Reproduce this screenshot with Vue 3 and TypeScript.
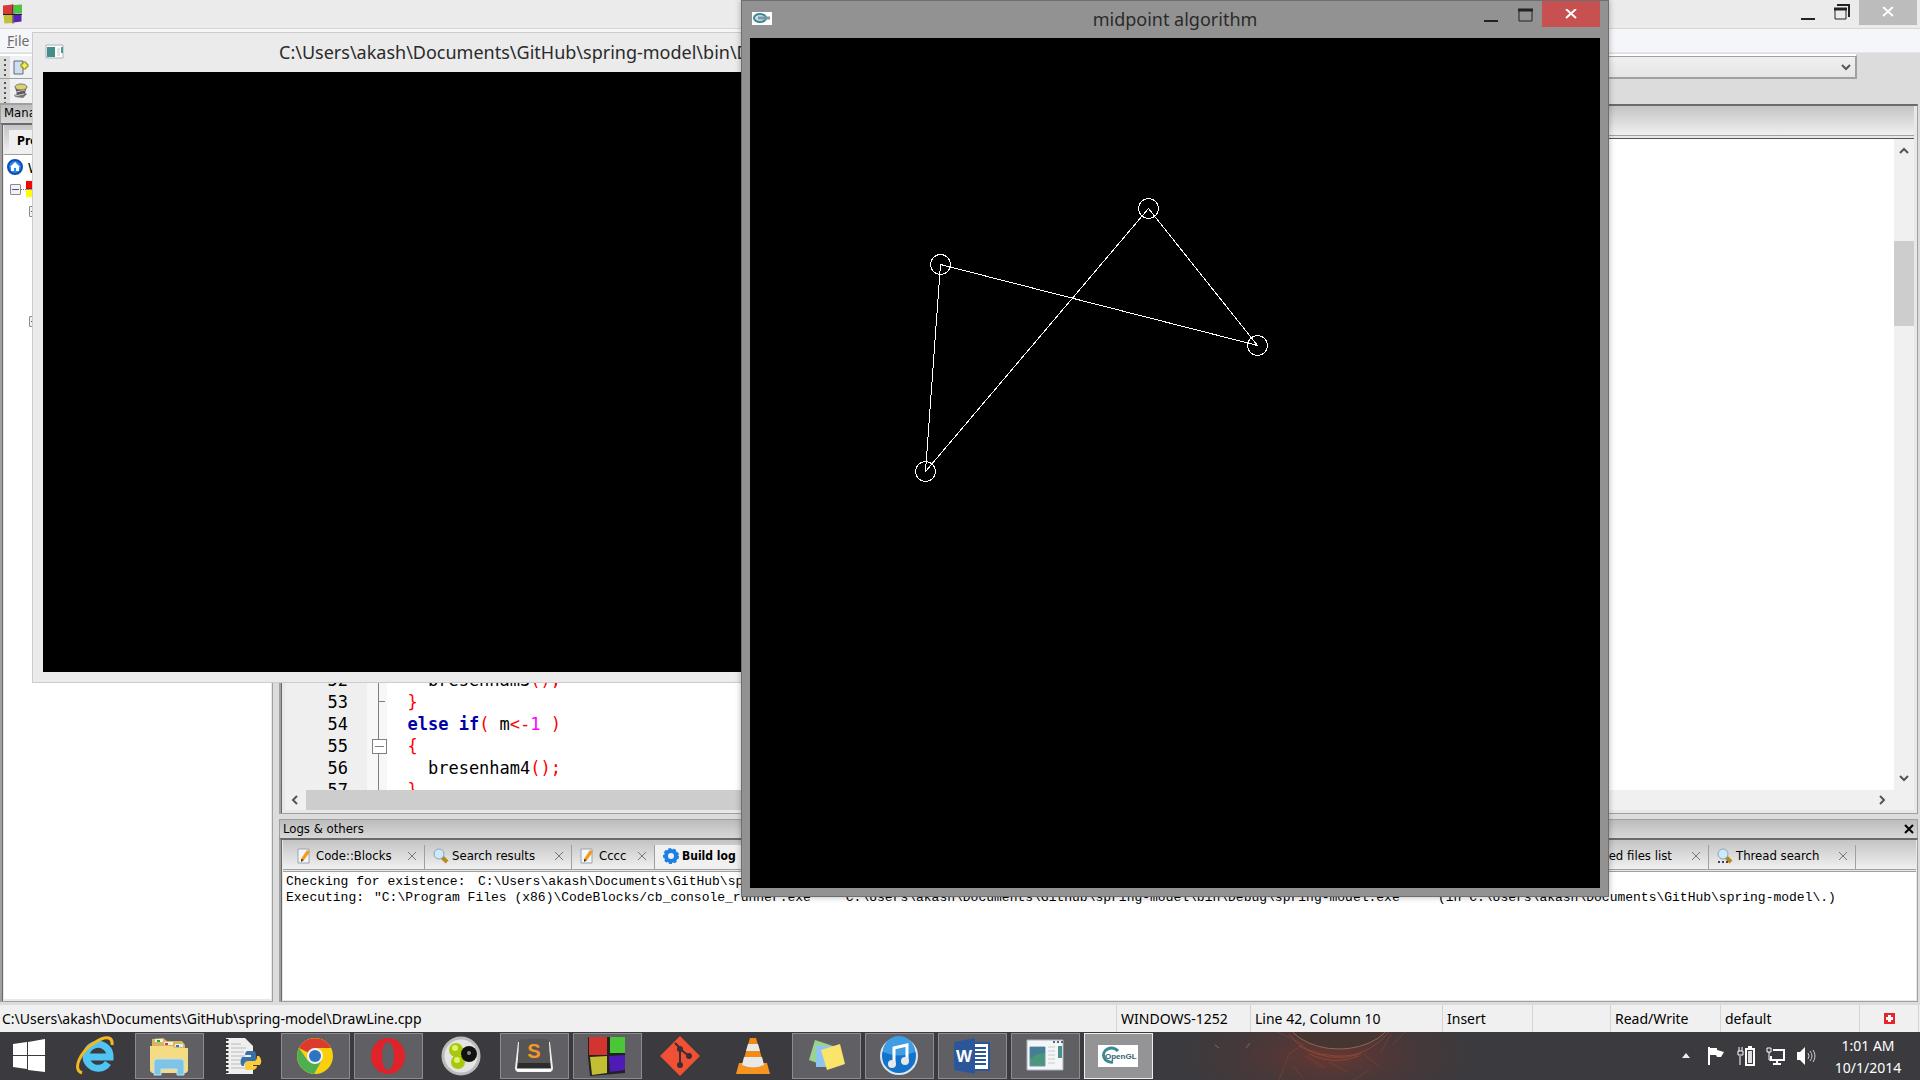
<script setup lang="ts">
import { computed, ref } from 'vue'

interface Point { x: number; y: number }
interface Token { text: string; kind?: 'kw' | 'op' | 'num' }
interface CodeLine { no: number; fold: 'line' | 'end' | 'box'; tokens: Token[] }

const points: Point[] = [
  { x: 398, y: 170 },
  { x: 507, y: 307 },
  { x: 190, y: 226 },
  { x: 175, y: 433 },
]
const outline = computed(() => points.map((p) => `${p.x},${p.y}`).join(' '))

const lines: CodeLine[] = [
  { no: 52, fold: 'line', tokens: [{ text: '    bresenham3' }, { text: '();', kind: 'op' }] },
  { no: 53, fold: 'end', tokens: [{ text: '  }', kind: 'op' }] },
  {
    no: 54,
    fold: 'line',
    tokens: [
      { text: '  else if', kind: 'kw' },
      { text: '(', kind: 'op' },
      { text: ' m' },
      { text: '<-', kind: 'op' },
      { text: '1', kind: 'num' },
      { text: ' )', kind: 'op' },
    ],
  },
  { no: 55, fold: 'box', tokens: [{ text: '  {', kind: 'op' }] },
  { no: 56, fold: 'line', tokens: [{ text: '    bresenham4' }, { text: '();', kind: 'op' }] },
  { no: 57, fold: 'line', tokens: [{ text: '  }', kind: 'op' }] },
]

const target = ref('')
const root = 'C:\\Users\\akash\\Documents\\GitHub\\spring-model'
const exe = root + '\\bin\\Debug\\spring-model.exe'
const runner = '"C:\\Program Files (x86)\\CodeBlocks/cb_console_runner.exe"'
</script>

<template>
  <div class="desktop">
    <main class="ide">
      <header class="ide-title">
        <svg class="app-icon" viewBox="0 0 38 38">
          <path d="M0 2 20 0V19L0 20z" fill="#d63a34" /><path d="M22 1 38 0V17L22 19z" fill="#4cc63a" />
          <path d="M1 21 19 20V37L3 38z" fill="#c2bf38" /><path d="M21 20 37 18V34L21 36z" fill="#5b22b8" />
          <path d="M20 0v38M0 20h38" stroke="#222" stroke-width="2" />
        </svg>
        <div class="win-controls">
          <button class="wc" aria-label="Minimize"><svg width="15" height="16"><path d="M0 15h14" stroke="#222" stroke-width="2" /></svg></button>
          <button class="wc" aria-label="Restore"><svg width="16" height="16"><path d="M3 1h12v12" fill="none" stroke="#222" stroke-width="2" /><path d="M1 5h11v10H1z" fill="#ebebeb" stroke="#222" /><path d="M0 5h13" stroke="#222" stroke-width="3" /></svg></button>
          <button class="wc close inactive" aria-label="Close"><svg width="12" height="10"><path d="M1 0 11 9M11 0 1 9" stroke="#fff" stroke-width="2" /></svg></button>
        </div>
      </header>
      <nav class="menubar"><button class="menu"><u>F</u>ile</button></nav>
      <div class="toolbars">
        <div class="toolbar first">
          <span class="grip"></span>
          <button class="tool" aria-label="New file">
            <svg width="16" height="16"><path d="M1 2h9v13H1z" fill="#cfdeee" stroke="#5e6b7a" /><path d="M8 5h2V3h3v2h2v3h-2v2h-3V8H8z" fill="#f1ef57" stroke="#8b8b1d" /></svg>
          </button>
          <select v-model="target" class="combo" aria-label="Symbol"><option value=""></option></select>
          <svg class="combo-arrow" width="10" height="7"><path d="m1 1 4 4 4-4" fill="none" stroke="#555" stroke-width="2" /></svg>
        </div>
        <div class="toolbar second">
          <span class="grip"></span>
          <button class="tool" aria-label="Build">
            <svg width="16" height="16"><path d="m1 12 9-3 4 2-4 4-8-1z" fill="#777" /><path d="M2 4 14 3l-2 7-8 2z" fill="#5a5a5a" /><path d="m3 9 9-2M2 13l9-2" stroke="#ccc" /><ellipse cx="8" cy="4" rx="6" ry="3" fill="#dfd06a" stroke="#777" /></svg>
          </button>
        </div>
      </div>

      <div class="body">
        <aside class="manager">
          <h2 class="caption">Management</h2>
          <div class="frame">
            <div class="strip"><button class="tab side active">Projects</button></div>
            <ul class="tree">
              <li>
                <svg width="16" height="16"><circle cx="8" cy="8" r="7" fill="#2a86ee" stroke="#0b4fae" stroke-width="2" /><path d="m8 3 5 5h-1v4H9V9H7v3H4V8H3z" fill="#fff" /></svg>
                <span>Workspace</span>
              </li>
              <li class="project">
                <span class="expander"></span><i class="dots"></i>
                <svg width="16" height="16"><path d="M0 0h8v8H0z" fill="#f00" /><path d="M0 9h8v7H0z" fill="#ff0" /><path d="M0 8h16" stroke="#333" /></svg>
              </li>
              <li class="child"><span class="expander"></span></li>
              <li class="child later"><span class="expander"></span></li>
            </ul>
          </div>
        </aside>

        <section class="work">
          <div class="frame editor">
            <div class="strip"></div>
            <div class="pane">
              <div class="view">
                <div class="code">
                  <div v-for="l in lines" :key="l.no" class="row">
                    <span class="no">{{ l.no }}</span>
                    <span class="fold" :class="l.fold"></span>
                    <pre class="src"><span v-for="(t, i) in l.tokens" :key="i" :class="t.kind">{{ t.text }}</span></pre>
                  </div>
                </div>
                <div class="vbar">
                  <svg width="10" height="8"><path d="m1 6 4-4 4 4" fill="none" stroke="#555" stroke-width="2" /></svg>
                  <i class="vthumb"></i>
                  <svg width="10" height="8"><path d="m1 2 4 4 4-4" fill="none" stroke="#555" stroke-width="2" /></svg>
                </div>
              </div>
              <div class="hbar">
                <svg width="8" height="10"><path d="M6 1 2 5l4 4" fill="none" stroke="#555" stroke-width="2" /></svg>
                <i class="hthumb"></i>
                <svg width="8" height="10"><path d="m2 1 4 4-4 4" fill="none" stroke="#555" stroke-width="2" /></svg>
              </div>
            </div>
          </div>

          <div class="logs">
            <h2 class="caption">
              Logs &amp; others
              <button class="cap-close" aria-label="Close panel"><svg width="10" height="10"><path d="m1 1 8 8M9 1 1 9" stroke="#000" stroke-width="2" /></svg></button>
            </h2>
            <div class="frame log-frame">
              <div class="strip log-tabs">
                <button class="tab t-blocks">
                  <svg width="16" height="16"><path d="M1 1h11v14H1z" fill="#f4f6fa" stroke="#9aa3b2" /><path d="m4 11 6-9 3 2-6 8-3 2z" fill="#f49a1c" /><path d="m4 11 3 1-3 2z" fill="#442" /></svg>
                  Code::Blocks<svg class="x" width="10" height="10"><path d="m1 1 8 8M9 1 1 9" stroke="#777" /></svg>
                </button>
                <button class="tab t-search">
                  <svg width="16" height="16"><path d="m9 9 5 5" stroke="#b98a1a" stroke-width="4" /><circle cx="6" cy="6" r="5" fill="#cdeafa" stroke="#86a6bd" /></svg>
                  Search results<svg class="x" width="10" height="10"><path d="m1 1 8 8M9 1 1 9" stroke="#777" /></svg>
                </button>
                <button class="tab t-cccc">
                  <svg width="16" height="16"><path d="M1 1h11v14H1z" fill="#f4f6fa" stroke="#9aa3b2" /><path d="m4 11 6-9 3 2-6 8-3 2z" fill="#f49a1c" /><path d="m4 11 3 1-3 2z" fill="#442" /></svg>
                  Cccc<svg class="x" width="10" height="10"><path d="m1 1 8 8M9 1 1 9" stroke="#777" /></svg>
                </button>
                <button class="tab t-build active">
                  <svg width="16" height="16"><circle cx="8" cy="8" r="5" fill="none" stroke="#1c7fe6" stroke-width="4" /><circle cx="8" cy="8" r="7" fill="none" stroke="#1c7fe6" stroke-width="2" stroke-dasharray="3 2" /></svg>
                  Build log
                </button>
                <button class="tab t-files">Closed files list<svg class="x" width="10" height="10"><path d="m1 1 8 8M9 1 1 9" stroke="#777" /></svg></button>
                <button class="tab t-search">
                  <svg width="16" height="16"><path d="m9 9 5 5" stroke="#b98a1a" stroke-width="4" /><circle cx="6" cy="6" r="5" fill="#cdeafa" stroke="#86a6bd" /><path d="M1 14h2m2 0h2m2 0h2" stroke="#444" stroke-width="2" /></svg>
                  Thread search<svg class="x" width="10" height="10"><path d="m1 1 8 8M9 1 1 9" stroke="#777" /></svg>
                </button>
              </div>
              <div class="log-text">
                <p class="check"><span>Checking for existence:</span><span>{{ exe }}</span></p>
                <p class="exec"><span>Executing:</span><span>{{ runner }}</span><span>"{{ exe }}"</span><span>(in {{ root }}\.)</span></p>
              </div>
            </div>
          </div>
        </section>
      </div>

      <footer class="status">
        <span class="path">{{ root }}\DrawLine.cpp</span>
        <span class="s-enc">WINDOWS-1252</span>
        <span class="s-pos">Line 42, Column 10</span>
        <span class="s-ins">Insert</span>
        <span class="s-empty"></span>
        <span class="s-rw">Read/Write</span>
        <span class="s-def">default</span>
        <span class="s-icon"><svg width="11" height="11"><path d="M0 0h11v11H0z" fill="#e8232a" /><path d="M4 2h3v2h2v3H7v2H4V7H2V4h2z" fill="#fff" /></svg></span>
      </footer>
    </main>

    <section class="window console">
      <header class="console-title">
        <svg width="20" height="16"><path d="M1 1h17v13H1z" fill="#fff" stroke="#a9b2bd" /><path d="M2 3h8v10H2z" fill="#458d8a" /><path d="M12 4h3v8h-3z" fill="#e4e4dc" /><path d="M16 3h2v6h-2z" fill="#4a9b8c" /></svg>
        <h1>{{ exe }}</h1>
      </header>
      <div class="screen"></div>
    </section>

    <section class="window gl">
      <header class="gl-title">
        <svg width="20" height="13"><path d="M0 0h20v13H0z" fill="#fff" /><ellipse cx="8" cy="6" rx="6" ry="4" fill="#cfdfe3" stroke="#3f8592" stroke-width="2" /><path d="M6 6h12" stroke="#7b98a8" stroke-width="3" /></svg>
        <h1>midpoint algorithm</h1>
        <div class="win-controls">
          <button class="wc" aria-label="Minimize"><svg width="14" height="16"><path d="M0 15h14" stroke="#222" stroke-width="2" /></svg></button>
          <button class="wc" aria-label="Maximize"><svg width="15" height="16"><path d="M1 4h13v11H1z" fill="none" stroke="#222" /><path d="M0 4h15" stroke="#222" stroke-width="3" /></svg></button>
          <button class="wc close" aria-label="Close"><svg width="12" height="10"><path d="M1 0 11 9M11 0 1 9" stroke="#fff" stroke-width="2" /></svg></button>
        </div>
      </header>
      <svg class="canvas" width="850" height="850" viewBox="0 0 850 850" shape-rendering="crispEdges" fill="none" stroke="#fff">
        <g transform="translate(0.5 0.5)">
          <polygon :points="outline" />
          <circle v-for="p in points" :key="p.x" :cx="p.x" :cy="p.y" r="10" />
        </g>
      </svg>
    </section>

    <nav class="taskbar">
      <svg class="wallpaper" width="320" height="48" fill="none">
        <defs>
          <radialGradient id="glow"><stop offset="0" stop-color="#8a3526" stop-opacity=".55" /><stop offset="1" stop-color="#552a2a" stop-opacity="0" /></radialGradient>
        </defs>
        <ellipse cx="175" cy="24" rx="160" ry="54" fill="url(#glow)" />
        <ellipse cx="186" cy="-18" rx="54" ry="35" fill="#453632" stroke="#a5704f" stroke-opacity=".8" />
        <path d="M136 2q14 20 46 22t54-24M146 14q30 18 62 8M156 22q24 12 50 2" stroke="#b8553a" stroke-opacity=".45" />
        <path d="M120 -2l30 14-14 10-10 26M152 24l20 12M176 30l18 10M210 22l16 12M228 20l10-18M240 12l12-12M150 46l-10-12M200 48l16-10" stroke="#a54a38" stroke-opacity=".35" />
        <path d="m62 13 4 3M93 16l4-5" stroke="#a08b6a" stroke-opacity=".6" />
      </svg>
      <button class="start" aria-label="Start">
        <svg width="32" height="34"><path d="M0 5 14 3V16H0zM15 3 32 0V16H15zM0 17H14V30L0 28zM15 17H32V33L15 31z" fill="#fff" /></svg>
      </button>
      <button class="task" aria-label="Internet Explorer">
        <svg width="40" height="40"><path d="M32 27a12 12 0 1 1 2-8v2H12" fill="none" stroke="#50c4f2" stroke-width="7" /><path d="M6 37C-4 34 4 16 18 7s19-5 18 2" fill="none" stroke="#f5b91d" stroke-width="3" /></svg>
      </button>
      <button class="task open" aria-label="File Explorer">
        <svg width="40" height="40"><path d="M3 3 14 2l4 3h15l3 4v28H3z" fill="#d9b85d" /><path d="M6 3h8v3H6z" fill="#eee" /><path d="M8 4h3v2H8z" fill="#27a143" /><path d="M15 6h9v3h-9z" fill="#eee" /><path d="M16 7h3v2h-3z" fill="#d33" /><path d="M26 8h8v3h-8z" fill="#eee" /><path d="M27 9h3v2h-3z" fill="#37c" /><path d="M1 10h22l3 2h13v23l-2 2H3l-2-2z" fill="#f3dc84" /><path d="M5 26q0-3 3-3h24q3 0 3 3v13h-7v-6H12v6H5z" fill="#7fc3e6" stroke="#b9e4f6" /></svg>
      </button>
      <button class="task" aria-label="Python">
        <svg width="40" height="40"><path d="M4 2h19l8 8v28H4z" fill="#efefef" /><path d="M5 3v35" stroke="#333" stroke-width="3" stroke-dasharray="2 2" /><path d="M9 8h10M9 12h15M9 16h13M9 20h14M9 24h11M9 28h12M9 32h14" stroke="#bbb" /><path d="M25 15h6q3 0 3 3v6q0 2-3 2h-6q-3 0-3 4h-2q-3-3 0-9h9v-2h-6q0-3 2-4z" fill="#3672a8" /><path d="M31 34h-6q-2 0-2-2v-4q0-3 3-3h6q3 0 3-5h2q4 4 1 9h-8v1h5q0 3-4 4z" fill="#fccb3a" /></svg>
      </button>
      <button class="task open" aria-label="Chrome">
        <svg width="40" height="40"><circle cx="20" cy="20" r="18" fill="#fccf0b" /><path d="M20 20 4 12A18 18 0 0 1 36 12H20z" fill="#dc3a2d" /><path d="M4 12A18 18 0 0 0 19 38L27 24 20 28 13 25z" fill="#4caf50" /><circle cx="20" cy="20" r="8" fill="#f2f2f2" /><circle cx="20" cy="20" r="6" fill="#2f74c0" /></svg>
      </button>
      <button class="task open" aria-label="Opera">
        <svg width="40" height="40"><ellipse cx="20" cy="20" rx="17" ry="18" fill="#e0222b" /><ellipse cx="20" cy="20" rx="6" ry="14" fill="#606064" /></svg>
      </button>
      <button class="task" aria-label="Media tool">
        <svg width="40" height="40"><circle cx="20" cy="20" r="18" fill="#e4e4e4" stroke="#bbb" stroke-width="3" /><circle cx="15" cy="14" r="7" fill="#a9c70c" /><circle cx="17" cy="26" r="7" fill="#a9c70c" /><circle cx="28" cy="18" r="8" fill="#111" /><circle cx="28" cy="17" r="2" fill="#888" /><circle cx="14" cy="12" r="3" fill="#e2f06a" /><circle cx="16" cy="24" r="3" fill="#e2f06a" /></svg>
      </button>
      <button class="task open" aria-label="Sublime Text">
        <svg width="40" height="40"><path d="M5 6 2 32q0 3 3 3h30q3 0 3-3L35 6" fill="#333" stroke="#eee" stroke-width="2" /><path d="M8 3h24q3 0 3 3l1 21H4L5 6q0-3 3-3z" fill="#555" /><path d="M4 27h32v5H4z" fill="#2c2c2c" /><path d="M3 34h34" stroke="#fff" stroke-width="3" /><text x="20" y="22" text-anchor="middle" class="s-letter">S</text></svg>
      </button>
      <button class="task open" aria-label="Code::Blocks">
        <svg width="40" height="40"><path d="M1 1h37v36L3 40 1 20z" fill="#222" /><path d="M2 1h18v18H2z" fill="#d3342f" /><path d="M23 1h15v16H23z" fill="#4ac737" /><path d="m3 21 17-1v17L5 39z" fill="#c2bf34" /><path d="m22 20 16-1v15l-15 2z" fill="#4e1cb4" /></svg>
      </button>
      <button class="task" aria-label="Git">
        <svg width="42" height="42"><path d="m21 1 20 20-20 20L1 21z" fill="#f05033" /><path d="m16 8 5 5v17M21 14l9 7" fill="none" stroke="#3a3033" stroke-width="2" /><circle cx="21" cy="14" r="3" fill="#3a3033" /><circle cx="21" cy="30" r="3" fill="#3a3033" /><circle cx="30" cy="21" r="3" fill="#3a3033" /></svg>
      </button>
      <button class="task" aria-label="VLC">
        <svg width="40" height="40"><path d="M6 27h28l3 11H3z" fill="#f7941d" /><path d="M17 2h6l8 27q-11 7-22 0z" fill="#f58a12" /><path d="M15 8h10l2 7H13zM11 21h18l2 8q-11 5-22 0z" fill="#e8e8e8" /></svg>
      </button>
      <button class="task open" aria-label="Sticky Notes">
        <svg width="40" height="40"><path d="m9 4 18 6-8 20-16-6z" fill="#9bd38e" /><path d="M10 10h18v21H10z" fill="#8fc4f0" /><path d="m15 14 19-6 5 20-18 6z" fill="#fbe46a" /></svg>
      </button>
      <button class="task open" aria-label="iTunes">
        <svg width="40" height="40"><circle cx="20" cy="20" r="18" fill="#1272cc" stroke="#dce6ee" stroke-width="2" /><path d="M4 16a16 16 0 0 1 32 0q-16 7-32 0z" fill="#3f9de4" /><path d="M15 28V12l13-3v16" fill="none" stroke="#fff" stroke-width="3" /><circle cx="13" cy="28" r="4" fill="#e8e8e8" /><circle cx="26" cy="25" r="4" fill="#e8e8e8" /></svg>
      </button>
      <button class="task open" aria-label="Word">
        <svg width="40" height="40"><path d="M20 7h17v27H20z" fill="#fff" stroke="#2b579a" stroke-width="2" /><path d="M22 12h12M22 16h12M22 20h12M22 24h12M22 28h12" stroke="#2b579a" stroke-width="2" /><path d="m2 6 21-4v36L2 34z" fill="#2b579a" /><text x="12" y="26" text-anchor="middle" class="w-letter">W</text></svg>
      </button>
      <button class="task open" aria-label="Console">
        <svg width="40" height="40"><path d="M2 4h36v30H2z" fill="#f3f5f7" stroke="#aab3bf" /><path d="M5 11h15v19H5z" fill="#4a9678" stroke="#6e90b8" /><path d="M5 11h15v6q-9 0-15 6z" fill="#447f94" /><path d="M23 11h7M23 15h7M23 19h7M23 23h7M23 27h7" stroke="#ccc" /><path d="M33 10h4v12h-4z" fill="#488f8e" /><path d="M28 6h2m2 0h2m2 0h2" stroke="#567" stroke-width="2" /></svg>
      </button>
      <button class="task open current" aria-label="midpoint algorithm">
        <svg width="40" height="22"><path d="M0 0h40v22H0z" fill="#fff" /><path d="M15 17A8 7 0 1 1 20 6" fill="none" stroke="#3b8896" stroke-width="3" /><text x="7" y="14" class="gl-letters">OpenGL</text></svg>
      </button>
      <div class="tray">
        <button class="tray-icon up" aria-label="Show hidden icons"><svg width="9" height="6"><path d="m0 5 4-5 4 5z" fill="#eee" /></svg></button>
        <button class="tray-icon" aria-label="Action Center"><svg width="20" height="20"><path d="M3 1v18" stroke="#fff" stroke-width="2" /><path d="M4 2h7v2l7 2-3 5h-4l-1-2H4z" fill="#fff" /></svg></button>
        <button class="tray-icon" aria-label="Battery"><svg width="20" height="20" fill="none" stroke="#fff"><path d="M10 3h8v16h-8z" stroke-width="2" /><path d="M12 5h4v12h-4z" fill="#ddd" stroke="none" /><path d="M12 1h4" stroke-width="2" /><path d="M3 1v4M6 1v4M2 5h5v4H2zM4 10v9" /></svg></button>
        <button class="tray-icon" aria-label="Network"><svg width="20" height="20" fill="none" stroke="#fff" stroke-width="2"><path d="M7 4h11v10H5v-4M11 14v4M7 18h8" /><path d="M1 2h4v4H1zM3 6v8h2" stroke-width="1" /></svg></button>
        <button class="tray-icon" aria-label="Volume"><svg width="20" height="20"><path d="M1 6h3l5-5v18l-5-5H1z" fill="#fff" /><path d="M12 7q2 3 0 6M14 5q4 5 0 10M17 4q4 6 0 12" fill="none" stroke="#ccc" /></svg></button>
        <time class="clock">1:01 AM<br />10/1/2014</time>
      </div>
    </nav>
  </div>
</template>

<style>
html,
body {
  margin: 0;
  height: 100%;
  overflow: hidden;
}
</style>

<style scoped>
.desktop {
  position: relative;
  height: 100vh;
  display: flex;
  flex-direction: column;
  overflow: hidden;
  color: #000;
  font-family: 'Noto Sans', 'Open Sans', sans-serif;
  font-size: 14px;
  background: #dcdcdc;
}
.desktop *,
.desktop {
  box-sizing: border-box;
}
svg {
  display: block;
  flex: none;
}
button {
  border: 0;
  padding: 0;
  margin: 0;
  background: none;
  font: inherit;
  color: inherit;
}
h1,
h2,
p,
ul,
pre {
  margin: 0;
  padding: 0;
  font-weight: 400;
}

/* IDE window */
.ide {
  flex: 1;
  min-height: 0;
  display: flex;
  flex-direction: column;
}
.ide-title {
  height: 29px;
  display: flex;
  justify-content: space-between;
  background: #ebebeb;
  border-bottom: 1px solid #d6d6d6;
  padding: 0 3px 0 3px;
}
.app-icon {
  width: 19px;
  height: 20px;
  margin-top: 4px;
}
.win-controls {
  display: flex;
  height: 25px;
}
.wc {
  width: 34px;
  display: flex;
  align-items: center;
  justify-content: center;
}
.wc.close {
  width: 58px;
  background: #c75050;
}
.wc.close.inactive {
  background: #bcbcbc;
}
.ide-title .wc svg {
  margin-bottom: 2px;
}
.menubar {
  height: 24px;
  padding-left: 7px;
  background: #f5f6f9;
  border-bottom: 1px solid #e6e7ea;
  display: flex;
  align-items: center;
}
.menu {
  font-size: 14px;
  line-height: 20px;
  color: #6d6d6d;
}
.toolbars {
  height: 51px;
  padding-top: 1px;
  background: #dcdcdc;
}
.toolbar {
  display: flex;
  align-items: center;
  height: 25px;
  background: #f0f1f3;
  border-bottom: 1px solid #a0a0a0;
}
.toolbar.first {
  margin-right: 63px;
  border-right: 1px solid #a0a0a0;
  border-top: 2px solid #fff;
}
.toolbar.second {
  width: 740px;
}
.grip {
  width: 10px;
  height: 100%;
  border-left: 4px solid #dcdcdc;
  border-right: 4px solid #dcdcdc;
  background: repeating-linear-gradient(#dcdcdc 0 3px, #555 3px 5px);
}
.tool {
  width: 22px;
  display: flex;
  justify-content: center;
}
.combo {
  flex: 1;
  height: 22px;
  appearance: none;
  border: 1px solid #a0a0a0;
  border-radius: 0;
  margin: 0 0 0 700px;
  background: linear-gradient(#f0f0f0, #e5e5e5);
}
.combo-arrow {
  margin-left: -15px;
  margin-right: 5px;
}
.body {
  flex: 1;
  min-height: 0;
  display: flex;
  gap: 6px;
  padding-right: 2px;
}
.manager {
  width: 273px;
  display: flex;
  flex-direction: column;
}
.caption {
  display: flex;
  align-items: center;
  justify-content: space-between;
  height: 19px;
  padding: 0 3px;
  border: 1px solid #a0a0a0;
  border-bottom: 0;
  background: linear-gradient(#bcbcbc, #d8d8d8);
  font-family: 'DejaVu Sans Condensed', sans-serif;
  font-size: 13px;
  line-height: 16px;
}
.manager .caption {
  padding-bottom: 2px;
}
.frame {
  flex: 1;
  min-height: 0;
  display: flex;
  flex-direction: column;
  border: 2px solid #a0a0a0;
  border-top-color: #6a6a6a;
  border-right: 1px solid #a0a0a0;
  border-bottom: 1px solid #a0a0a0;
  box-shadow: inset 1px 0 #696969;
  padding: 0 3px 3px 4px;
  margin-bottom: 2px;
  background: #e8e8e8;
}
.manager .frame {
  padding: 0 1px 2px 2px;
}
.strip {
  height: 30px;
  display: flex;
  align-items: flex-end;
  background: linear-gradient(#c4c4c4, #f0f0f0);
  border-bottom: 1px solid #a0a0a0;
}
.tab {
  height: 24px;
  display: flex;
  align-items: center;
  gap: 3px;
  padding: 0 7px 2px 8px;
  white-space: nowrap;
  font-family: 'DejaVu Sans Condensed', sans-serif;
  font-size: 13px;
  line-height: 16px;
}
.tab.active {
  background: #f0f0f0;
  font-weight: 700;
  font-size: 12px;
}
.tab.side {
  margin-left: 5px;
}
.tree {
  flex: 1;
  list-style: none;
  background: #fff;
  padding: 1px 0 0 3px;
}
.tree li {
  height: 22px;
  display: flex;
  align-items: center;
  gap: 5px;
}
.tree .project {
  gap: 0;
  padding-left: 3px;
}
.dots {
  width: 5px;
  border-top: 1px dotted #777;
}
.tree .child {
  padding-left: 22px;
}
.tree .later {
  margin-top: 88px;
}
.expander {
  width: 11px;
  height: 11px;
  border: 1px solid #8a8a8a;
  border-radius: 1px;
  background: linear-gradient(#3b5aa0, #3b5aa0) center / 7px 1px no-repeat, #f2f2f2;
}
.work {
  flex: 1;
  min-width: 0;
  display: flex;
  flex-direction: column;
}
.pane {
  flex: 1;
  min-height: 0;
  display: flex;
  flex-direction: column;
  border-top: 1px solid #555;
  margin-top: 2px;
}
.view {
  flex: 1;
  min-height: 0;
  display: flex;
  overflow: hidden;
  background: #fff;
}
.code {
  flex: 1;
  display: flex;
  flex-direction: column;
  justify-content: flex-end;
  margin-bottom: -11px;
  background: linear-gradient(90deg, #efefef 82px, #f7f7f7 82px 102px, #fff 102px);
  font-family: 'DejaVu Sans Mono', monospace;
  font-size: 17px;
  line-height: 22px;
}
.row {
  display: flex;
  height: 22px;
}
.no {
  width: 63px;
  margin-right: 20px;
  text-align: right;
}
.fold {
  position: relative;
  width: 19px;
  background: linear-gradient(#808080, #808080) 10px 0 / 1px 100% no-repeat;
}
.fold.end::after {
  content: '';
  position: absolute;
  left: 10px;
  top: 10px;
  width: 7px;
  height: 1px;
  background: #808080;
}
.fold.box::after {
  content: '';
  position: absolute;
  left: 4px;
  top: 4px;
  width: 13px;
  height: 13px;
  border: 1px solid #808080;
  background: linear-gradient(#808080, #808080) center / 9px 1px no-repeat, #fff;
}
.src {
  font: inherit;
}
.kw {
  color: #00a;
  font-weight: 700;
}
.op {
  color: #f00;
}
.num {
  color: #f0f;
}
.vbar {
  width: 20px;
  display: flex;
  flex-direction: column;
  align-items: center;
  padding: 8px 0;
  background: #f0f0f0;
}
.vthumb {
  width: 100%;
  height: 85px;
  margin: 86px 0 auto;
  background: #cdcdcd;
}
.hbar {
  height: 20px;
  display: flex;
  align-items: center;
  gap: 7px;
  padding: 0 28px 0 6px;
  background: #f0f0f0;
}
.hthumb {
  width: 60%;
  height: 100%;
  margin-right: auto;
  background: #cdcdcd;
}
.logs {
  height: 185px;
  margin-top: 3px;
  display: flex;
  flex-direction: column;
}
.cap-close {
  width: 10px;
}
.log-frame {
  padding: 0 1px 1px 2px;
}
.log-tabs {
  padding-left: 6px;
}
.log-tabs .tab {
  border-right: 1px solid #a0a0a0;
}
.tab .x {
  margin-left: auto;
}
.t-blocks {
  width: 136px;
}
.t-search {
  width: 147px;
}
.t-cccc {
  width: 83px;
}
.log-tabs .t-build {
  width: 120px;
}
.t-files {
  width: 133px;
  margin-left: auto;
}
.log-tabs .t-search:last-child {
  margin-right: 60px;
}
.log-text {
  flex: 1;
  margin-top: 1px;
  padding: 2px 3px;
  background: #fff;
  border-top: 1px solid #a0a0a0;
  font-family: 'Liberation Mono', monospace;
  font-size: 13px;
  line-height: 16px;
  white-space: nowrap;
  overflow: hidden;
}
.check {
  display: grid;
  grid-template-columns: 192px auto;
}
.exec {
  display: grid;
  grid-template-columns: 88px 464px 600px auto;
}
.status {
  height: 28px;
  display: flex;
  padding-right: 1px;
  background: #f0f0f0;
  border-top: 1px solid #dcdcdc;
  line-height: 28px;
  white-space: nowrap;
}
.status span {
  padding-left: 4px;
  border-right: 1px solid #d4d4d4;
}
.status .path {
  flex: 1;
  padding-left: 2px;
}
.s-enc {
  width: 134px;
}
.s-pos {
  width: 192px;
}
.s-ins {
  width: 90px;
}
.s-empty {
  width: 78px;
}
.s-rw {
  width: 110px;
}
.s-def {
  width: 139px;
}
.status .s-icon {
  width: 59px;
  padding-left: 0;
  display: flex;
  align-items: center;
  justify-content: center;
}

/* Floating windows */
.window {
  position: absolute;
  display: flex;
  flex-direction: column;
}
.console {
  left: 32px;
  top: 32px;
  width: 860px;
  height: 651px;
  padding: 0 10px 10px;
  background: #ebebeb;
  border: 1px solid #ccc;
}
.console-title {
  height: 39px;
  display: flex;
  align-items: center;
  padding: 0 0 2px 2px;
  gap: 214px;
}
.console-title h1 {
  white-space: nowrap;
}
.window h1 {
  font-size: 18px;
  line-height: 24px;
  color: #2a2a2a;
}
.screen {
  flex: 1;
  background: #000;
}
.gl {
  left: 741px;
  top: 0;
  width: 868px;
  padding: 0 8px 8px;
  background: #929292;
  border: 1px solid #6e6e6e;
  box-shadow: 0 0 6px rgba(0, 0, 0, 0.3);
}
.gl-title {
  height: 37px;
  display: flex;
  align-items: center;
  padding: 0 0 2px 2px;
}
.gl-title h1 {
  flex: 1;
  padding-left: 104px;
  text-align: center;
}
.gl-title .win-controls {
  align-self: flex-start;
  height: 26px;
}
.gl .canvas {
  background: #000;
}

/* Taskbar */
.taskbar {
  position: relative;
  height: 48px;
  display: flex;
  align-items: center;
  gap: 4px;
  background: #3b3b3f;
}
.wallpaper {
  position: absolute;
  left: 1153px;
  top: 0;
}
.start {
  width: 58px;
  display: flex;
  justify-content: center;
}
.task {
  width: 69px;
  height: 46px;
  display: flex;
  align-items: center;
  justify-content: center;
  position: relative;
  padding-right: 2px;
}
.task.open {
  background: #606064;
  border: 1px solid #8c8c90;
}
.task.current {
  background: #949497;
  border-color: #eee;
}
.s-letter {
  font: 700 20px 'Liberation Sans', sans-serif;
  fill: #f7962a;
}
.w-letter {
  font: 700 17px 'Liberation Sans', sans-serif;
  fill: #fff;
}
.gl-letters {
  font: 700 8px 'Liberation Sans', sans-serif;
  fill: #35606f;
}
.tray {
  margin-left: auto;
  display: flex;
  align-items: center;
  gap: 10px;
  padding-right: 10px;
  color: #fff;
}
.tray-icon {
  width: 20px;
}
.tray-icon.up {
  width: 14px;
}
.clock {
  width: 84px;
  padding-top: 2px;
  text-align: center;
  font-size: 14px;
  line-height: 22px;
}
</style>
